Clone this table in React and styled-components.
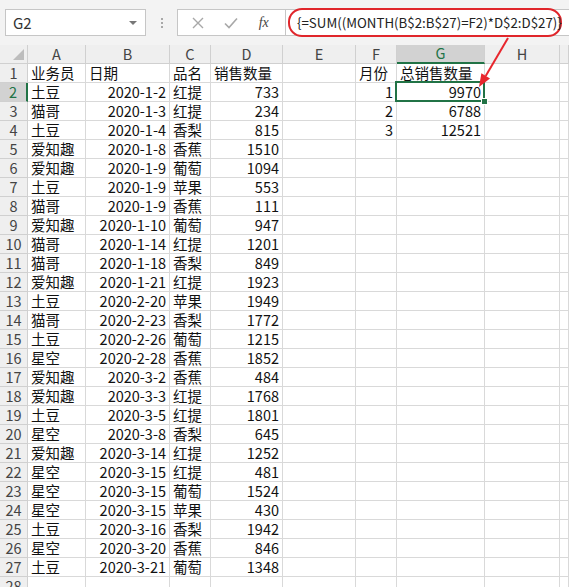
import React from 'react'
import styled, { createGlobalStyle } from 'styled-components'

const GlobalStyle = createGlobalStyle`
  html, body {
    margin: 0;
    padding: 0;
    background: #ffffff;
  }
  body {
    font-family: "Noto Sans CJK SC", "Noto Sans", sans-serif;
  }
`

// row header + A..H, the last column (I) takes the rest
const COLS = [28, 58, 84, 41, 72, 73, 41, 88, 75]
const LETTERS = ['A', 'B', 'C', 'D', 'E', 'F', 'G', 'H']
const GREEN = '#217346'

const rows = [
  ['业务员', '日期', '品名', '销售数量', '', '月份', '总销售数量'],
  ['土豆', '2020-1-2', '红提', '733', '', '1', '9970'],
  ['猫哥', '2020-1-3', '红提', '234', '', '2', '6788'],
  ['土豆', '2020-1-4', '香梨', '815', '', '3', '12521'],
  ['爱知趣', '2020-1-8', '香蕉', '1510'],
  ['爱知趣', '2020-1-9', '葡萄', '1094'],
  ['土豆', '2020-1-9', '苹果', '553'],
  ['猫哥', '2020-1-9', '香蕉', '111'],
  ['爱知趣', '2020-1-10', '葡萄', '947'],
  ['猫哥', '2020-1-14', '红提', '1201'],
  ['猫哥', '2020-1-18', '香梨', '849'],
  ['爱知趣', '2020-1-21', '红提', '1923'],
  ['土豆', '2020-2-20', '苹果', '1949'],
  ['猫哥', '2020-2-23', '香梨', '1772'],
  ['土豆', '2020-2-26', '葡萄', '1215'],
  ['星空', '2020-2-28', '香蕉', '1852'],
  ['爱知趣', '2020-3-2', '香蕉', '484'],
  ['爱知趣', '2020-3-3', '红提', '1768'],
  ['土豆', '2020-3-5', '红提', '1801'],
  ['星空', '2020-3-8', '香梨', '645'],
  ['爱知趣', '2020-3-14', '红提', '1252'],
  ['星空', '2020-3-15', '红提', '481'],
  ['星空', '2020-3-15', '葡萄', '1524'],
  ['星空', '2020-3-15', '苹果', '430'],
  ['土豆', '2020-3-16', '香梨', '1942'],
  ['星空', '2020-3-20', '香蕉', '846'],
  ['土豆', '2020-3-21', '葡萄', '1348'],
  [],
]

const Page = styled.div`
  position: relative;
  width: 569px;
  height: 587px;
  overflow: hidden;
  background: #fff;
`

const Toolbar = styled.div`
  display: flex;
  align-items: center;
  height: 45px;
  padding-left: 5px;
  background: #f3f3f3;
  box-sizing: border-box;
`

const NameBox = styled.div`
  display: flex;
  align-items: center;
  justify-content: space-between;
  width: 141px;
  height: 27px;
  padding: 0 8px 0 7px;
  box-sizing: border-box;
  background: #fff;
  border: 1px solid #c6c6c6;
  font-size: 15px;
  color: #333;
`

const DropArrow = styled.span`
  width: 0;
  height: 0;
  border-left: 4px solid transparent;
  border-right: 4px solid transparent;
  border-top: 4px solid #777;
`

const Grip = styled.div`
  display: flex;
  flex-direction: column;
  align-items: center;
  gap: 2px;
  width: 31px;
  span {
    width: 2px;
    height: 2px;
    background: #a8a8a8;
  }
`

const FxBox = styled.div`
  display: flex;
  align-items: center;
  justify-content: space-around;
  width: 109px;
  height: 27px;
  box-sizing: border-box;
  background: #fff;
  border: 1px solid #c6c6c6;
  padding: 0 6px 0 4px;
`

const FxLabel = styled.span`
  font-family: "Liberation Serif", serif;
  font-style: italic;
  font-size: 14px;
  color: #444;
`

const FormulaInput = styled.div`
  flex: 1;
  display: flex;
  align-items: center;
  height: 27px;
  background: #fff;
  border-top: 1px solid #c6c6c6;
  border-bottom: 1px solid #c6c6c6;
  box-sizing: border-box;
  padding-left: 2px;
`

const Highlight = styled.div`
  display: flex;
  align-items: center;
  width: 274px;
  height: 29px;
  box-sizing: border-box;
  border: 2px solid #e0262b;
  border-radius: 14px;
  padding-left: 7px;
  font-size: 13.3px;
  color: #222;
  white-space: nowrap;
`

const Sheet = styled.div`
  display: grid;
  grid-template-columns: ${COLS.map(w => w + 'px').join(' ')} 1fr;
  grid-auto-rows: 19px;
`

const Header = styled.div`
  display: flex;
  align-items: center;
  justify-content: center;
  box-sizing: border-box;
  background: ${p => (p.$active ? '#d2d2d2' : '#efefef')};
  border-right: 1px solid #d0d0d0;
  border-bottom: 1px solid #d0d0d0;
  ${p => p.$active && p.$col && `border-bottom: 2px solid ${GREEN};`}
  ${p => p.$active && p.$row && `border-right: 2px solid ${GREEN};`}
  font-size: 14.5px;
  color: ${p => (p.$active ? GREEN : '#444')};
  line-height: 1;
`

const Corner = styled(Header)`
  position: relative;
  &::after {
    content: '';
    position: absolute;
    right: 3px;
    bottom: 3px;
    width: 0;
    height: 0;
    border-left: 11px solid transparent;
    border-bottom: 11px solid #bdbdbd;
  }
`

const Cell = styled.div`
  position: relative;
  display: flex;
  align-items: center;
  justify-content: ${p => (p.$num ? 'flex-end' : 'flex-start')};
  padding: 0 3px;
  box-sizing: border-box;
  border-right: 1px solid #d9d9d9;
  border-bottom: 1px solid #d9d9d9;
  font-size: 14.5px;
  color: #111;
  white-space: nowrap;
  line-height: 1;
  ${p =>
    p.$selected &&
    `
    &::before {
      content: '';
      position: absolute;
      left: -2px;
      top: -2px;
      right: -1px;
      bottom: -1px;
      border: 2px solid ${GREEN};
    }
    &::after {
      content: '';
      position: absolute;
      right: -4px;
      bottom: -4px;
      width: 5px;
      height: 5px;
      background: ${GREEN};
      border: 1px solid #fff;
      z-index: 2;
    }
  `}
`

const ArrowLayer = styled.svg`
  position: absolute;
  left: 0;
  top: 0;
  pointer-events: none;
`

const isNum = v => /^[\d-]+$/.test(v)

export default function App() {
  return (
    <Page>
      <GlobalStyle />
      <Toolbar>
        <NameBox>
          G2
          <DropArrow />
        </NameBox>
        <Grip>
          <span />
          <span />
          <span />
        </Grip>
        <FxBox>
          <svg width="12" height="12" viewBox="0 0 12 12">
            <path d="M1 1 L11 11 M11 1 L1 11" stroke="#a8a8a8" strokeWidth="1.4" fill="none" />
          </svg>
          <svg width="14" height="12" viewBox="0 0 14 12">
            <path d="M1 6.5 L5 10.5 L13 1.5" stroke="#a8a8a8" strokeWidth="1.6" fill="none" />
          </svg>
          <FxLabel>fx</FxLabel>
        </FxBox>
        <FormulaInput>
          <Highlight>{'{=SUM((MONTH(B$2:B$27)=F2)*D$2:D$27)}'}</Highlight>
        </FormulaInput>
      </Toolbar>

      <Sheet>
        <Corner />
        {LETTERS.map(l => (
          <Header key={l} $col $active={l === 'G'}>
            {l}
          </Header>
        ))}
        <Header />
        {rows.map((r, i) => (
          <React.Fragment key={i}>
            <Header $row $active={i === 1}>
              {i + 1}
            </Header>
            {LETTERS.map((l, c) => {
              const v = r[c] || ''
              return (
                <Cell key={l} $num={i > 0 && isNum(v)} $selected={i === 1 && l === 'G'}>
                  {v}
                </Cell>
              )
            })}
            <Cell />
          </React.Fragment>
        ))}
      </Sheet>

      <ArrowLayer width="569" height="587">
        <line x1="508" y1="38" x2="485.7" y2="75.9" stroke="#e8262d" strokeWidth="2" />
        <polygon points="479,87 490,78.5 481.4,73.3" fill="#e8262d" />
      </ArrowLayer>
    </Page>
  )
}
